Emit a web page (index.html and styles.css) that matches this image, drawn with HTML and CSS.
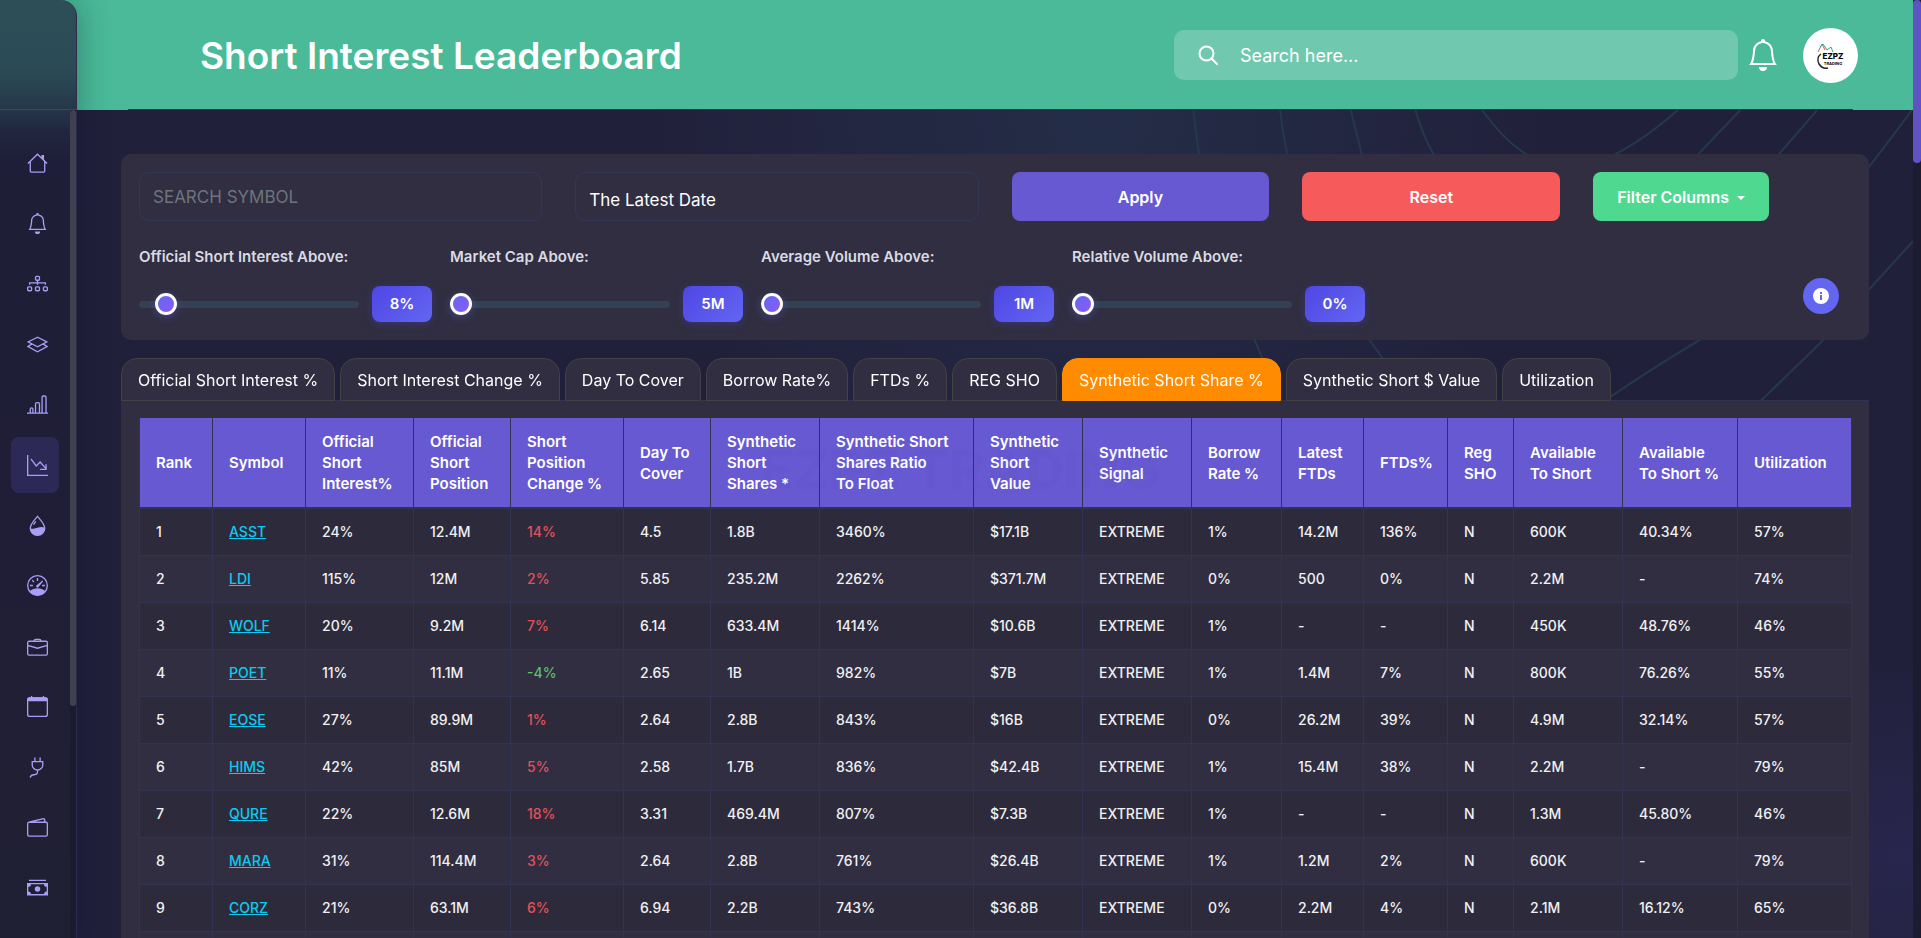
FILE: index.html
```
<!DOCTYPE html>
<html lang="en">
<head>
  <meta charset="UTF-8">
  <meta name="viewport" content="width=device-width, initial-scale=1.0">
  <title>Short Interest Leaderboard</title>
  <link rel="stylesheet" href="styles.css">
</head>
<body>

  <!-- Sidebar -->
  <aside class="sidebar">
    <div class="sidebar-logo"></div>
    <div class="sidebar-body">
      <nav class="sidebar-nav">
        <a href="#" aria-label="Home"><svg viewBox="0 0 16 16"><path class="line" d="M.7 8 8 .9 15.300 8M2.500 6.700v7.100a.7.7 0 0 0 .7.7h9.600a.7.7 0 0 0 .7-.7V6.700"/><path d="M11 1.500h2v4.300l-2-2z"/></svg></a>
        <a href="#" aria-label="Alerts"><svg viewBox="0 0 16 16"><path d="M8 16a2 2 0 0 0 2-2H6a2 2 0 0 0 2 2M8 1.918l-.797.161A4 4 0 0 0 4 6c0 .628-.134 2.197-.459 3.742-.16.767-.376 1.566-.663 2.258h10.244c-.287-.692-.502-1.490-.663-2.258C12.134 8.197 12 6.628 12 6a4 4 0 0 0-3.203-3.920zM14.220 12c.223.447.481.801.78 1H1c.299-.199.557-.553.78-1C2.680 10.200 3 6.880 3 6c0-2.420 1.720-4.440 4.005-4.901a1 1 0 1 1 1.990 0A5 5 0 0 1 13 6c0 .88.32 4.200 1.220 6"/></svg></a>
        <a href="#" aria-label="Structure"><svg viewBox="0 0 16 16"><g class="line"><rect x="6.500" y="2.500" width="3" height="3" rx=".8"/><rect x=".5" y="10.500" width="3" height="3" rx=".8"/><rect x="6.500" y="10.500" width="3" height="3" rx=".8"/><rect x="12.500" y="10.500" width="3" height="3" rx=".8"/><path d="M8 5.500V9M2 9V7.500h12V9"/></g></svg></a>
        <a href="#" aria-label="Layers"><svg viewBox="0 0 16 16"><path class="line" d="M8 2.500.8 6 8 9.700 15.200 6zM3.600 7.700.8 9.500 8 13.500l7.200-4-2.800-1.800"/></svg></a>
        <a href="#" aria-label="Charts"><svg viewBox="0 0 16 16"><path class="line" d="M0 14.500h16M2.500 14v-2.500a1 1 0 0 1 1-1h0a1 1 0 0 1 1 1V14M6.500 14V7.500a1 1 0 0 1 1-1h1a1 1 0 0 1 1 1V14M11.500 14V2.500a1 1 0 0 1 1-1h1a1 1 0 0 1 1 1V14"/></svg></a>
        <a href="#" class="active" aria-label="Short Interest"><svg viewBox="0 0 16 16"><path class="line" d="M.5 0v15.500H16M3 3l4 5.300 3-3 4.300 4.900M10 11h4.500V7"/></svg></a>
        <a href="#" aria-label="Liquidity"><svg viewBox="0 0 16 16"><path class="line" d="M8 1C6 3.500 2.500 7 2.500 10a5.500 5.500 0 0 0 11 0C13.500 7 10 3.500 8 1zM5 7.300l1.700-2.500"/><path d="M2.500 10c2 .9 4 .3 5.500-.2s3.500-1 5.500-.1c0 3.300-2.500 5.800-5.500 5.800S2.500 13.200 2.500 10"/></svg></a>
        <a href="#" aria-label="Speed"><svg viewBox="0 0 16 16"><circle class="line" cx="8" cy="8" r="7.500"/><path class="line" d="M8 2.300v2.200M2.300 8h2.200M11.500 8h2.200M4 4l1.300 1.300"/><path d="m11.800 4.200.5.500L8.800 9.200a1 1 0 1 1-1.500-1.300zM2 12.400C4 10.500 6 10 8 10s4 .5 6 2.400c-1.300 2-3.500 3.200-6 3.200s-4.700-1.200-6-3.200"/></svg></a>
        <a href="#" aria-label="Portfolio"><svg viewBox="0 0 16 16"><path class="line" d="M1.500 4h13a1 1 0 0 1 1 1v8.500a1 1 0 0 1-1 1h-13a1 1 0 0 1-1-1V5a1 1 0 0 1 1-1zM.5 7.200 8 9.300l7.500-2.100M5.500 4v-.5a1 1 0 0 1 1-1h3a1 1 0 0 1 1 1V4"/></svg></a>
        <a href="#" aria-label="Calendar"><svg viewBox="0 0 16 16"><rect class="line" x=".5" y="1.500" width="15" height="14" rx="1.500"/><path d="M3 0h1v1h8V0h1v1h1a2 2 0 0 1 2 2v1H0V3a2 2 0 0 1 2-2h1z"/></svg></a>
        <a href="#" aria-label="Connections"><svg viewBox="0 0 16 16"><path class="line" d="M6 .3v3.200M10 .3v3.200M4 3.500h8v2.800a4 3.600 0 0 1-8 0zM8 9.900v1.400c0 2-1 2.200-2.600 2.200s-2.600.3-3 2.200"/></svg></a>
        <a href="#" aria-label="Wallet"><svg viewBox="0 0 16 16"><path class="line" d="M1.500 4h13a1 1 0 0 1 1 1v8.500a1 1 0 0 1-1 1h-13a1 1 0 0 1-1-1V5a1 1 0 0 1 1-1zM1.500 4l11-2.700a.9.9 0 0 1 1 .8V4"/></svg></a>
        <a href="#" aria-label="Cash"><svg viewBox="0 0 16 16"><path d="M1.500 2h13v1h-13zM0 4.500h16v9.500H0zm3 1a2 2 0 0 1-2 2V11a2 2 0 0 1 2 2h10a2 2 0 0 1 2-2V7.500a2 2 0 0 1-2-2z" fill-rule="evenodd"/><circle cx="8" cy="9.200" r="2.100"/></svg></a>
      </nav>
      <div class="sidebar-scroll"><div class="sidebar-thumb"></div></div>
    </div>
  </aside>

  <div class="page">
    <!-- Header -->
    <header class="header">
      <h1>Short Interest Leaderboard</h1>
      <div class="header-right">
        <label class="search">
          <svg viewBox="0 0 20 20"><circle cx="8.500" cy="8.500" r="7"/><path d="m13.500 13.500 5.500 5.500"/></svg>
          <input type="text" placeholder="Search here..." aria-label="Search">
        </label>
        <button class="bell" aria-label="Notifications">
          <svg viewBox="0 0 16 16"><path d="M8 16a2 2 0 0 0 2-2H6a2 2 0 0 0 2 2M8 1.918l-.797.161A4 4 0 0 0 4 6c0 .628-.134 2.197-.459 3.742-.16.767-.376 1.566-.663 2.258h10.244c-.287-.692-.502-1.490-.663-2.258C12.134 8.197 12 6.628 12 6a4 4 0 0 0-3.203-3.920zM14.220 12c.223.447.481.801.78 1H1c.299-.199.557-.553.78-1C2.680 10.200 3 6.880 3 6c0-2.420 1.720-4.440 4.005-4.901a1 1 0 1 1 1.990 0A5 5 0 0 1 13 6c0 .88.32 4.200 1.220 6"/></svg>
        </button>
        <a href="#" class="avatar" aria-label="Profile">
          <svg viewBox="0 0 55 55">
            <path d="M18 26c-3 2-4 6-2 10 2 3 5 5 9 4" fill="none" stroke="#222" stroke-width="1.500"/>
            <path d="m15 24 4-8 3 6" fill="none" stroke="#e0525f"/>
            <path d="m17 19 3-3 4 6 4-3 2 5" fill="none" stroke="#35a28a"/>
            <text x="30" y="31" text-anchor="middle" font-size="8" font-weight="800">EZPZ</text>
            <text x="30" y="37" text-anchor="middle" font-size="4" font-weight="700">TRADING</text>
          </svg>
        </a>
      </div>
    </header>

    <main class="main">
      <!-- Contour lines behind the panels -->
      <svg class="contours" viewBox="77 110 1836 828" preserveAspectRatio="xMaxYMin slice" aria-hidden="true">
        <path d="M1200 110Q1212 240 1284 390M1286 110Q1300 240 1389 358T1480 430M1356 110Q1362 135 1367 154M1420 110Q1427 135 1438 154"/>
        <path d="M1486 110C1540 185 1595 185 1680 110M1742 110 1700 154M1818 110 1780 154M1912 110Q1780 290 1698 340T1600 405M1913 240 1822 340 1750 410"/>
      </svg>

      <!-- Filters -->
      <form class="filters">
        <div class="filter-row">
          <input class="field" type="text" placeholder="SEARCH SYMBOL" aria-label="Search symbol">
          <select class="field" aria-label="Date"><option>The Latest Date</option></select>
          <button type="button" class="btn btn-apply">Apply</button>
          <button type="button" class="btn btn-reset">Reset</button>
          <button type="button" class="btn btn-columns">Filter Columns</button>
        </div>
        <div class="slider-row">
          <div class="slider">
            <label for="shortInterest">Official Short Interest Above:</label>
            <div class="slider-line"><input type="range" id="shortInterest" value="8"><output for="shortInterest">8%</output></div>
          </div>
          <div class="slider">
            <label for="marketCap">Market Cap Above:</label>
            <div class="slider-line"><input type="range" id="marketCap" value="0"><output for="marketCap">5M</output></div>
          </div>
          <div class="slider">
            <label for="avgVolume">Average Volume Above:</label>
            <div class="slider-line"><input type="range" id="avgVolume" value="0"><output for="avgVolume">1M</output></div>
          </div>
          <div class="slider">
            <label for="relVolume">Relative Volume Above:</label>
            <div class="slider-line"><input type="range" id="relVolume" value="0"><output for="relVolume">0%</output></div>
          </div>
          <button type="button" class="info" aria-label="Info"><svg viewBox="0 0 16 16"><circle cx="8" cy="8" r="8"/><path d="M7 7h2v5H7zM7 4h2v2H7z"/></svg></button>
        </div>
      </form>

      <!-- Tabs -->
      <div class="tabs" role="tablist">
        <button role="tab">Official Short Interest %</button>
        <button role="tab">Short Interest Change %</button>
        <button role="tab">Day To Cover</button>
        <button role="tab">Borrow Rate%</button>
        <button role="tab">FTDs %</button>
        <button role="tab">REG SHO</button>
        <button role="tab" class="active" aria-selected="true">Synthetic Short Share %</button>
        <button role="tab">Synthetic Short $ Value</button>
        <button role="tab">Utilization</button>
      </div>

      <div class="table-wrap">
        <table>
          <colgroup>
            <col class="w-rank"><col class="w-symbol"><col class="w-interest"><col class="w-position"><col class="w-change"><col class="w-cover"><col class="w-shares"><col class="w-ratio"><col class="w-value"><col class="w-signal"><col class="w-borrow"><col class="w-ftds"><col class="w-ftdp"><col class="w-reg"><col class="w-avail"><col class="w-availp"><col class="w-util">
          </colgroup>
          <thead>
            <tr>
              <th>Rank</th><th>Symbol</th><th>Official<br>Short<br>Interest%</th><th>Official<br>Short<br>Position</th><th>Short<br>Position<br>Change %</th><th>Day To<br>Cover</th><th>Synthetic<br>Short<br>Shares *</th><th>Synthetic Short<br>Shares Ratio<br>To Float</th><th>Synthetic<br>Short<br>Value</th><th>Synthetic<br>Signal</th><th>Borrow<br>Rate %</th><th>Latest<br>FTDs</th><th>FTDs%</th><th>Reg<br>SHO</th><th>Available<br>To Short</th><th>Available<br>To Short %</th><th>Utilization</th>
            </tr>
          </thead>
          <tbody>
            <tr><td>1</td><td><a href="#">ASST</a></td><td>24%</td><td>12.4M</td><td class="up">14%</td><td>4.5</td><td>1.8B</td><td>3460%</td><td>$17.1B</td><td>EXTREME</td><td>1%</td><td>14.2M</td><td>136%</td><td>N</td><td>600K</td><td>40.34%</td><td>57%</td></tr>
            <tr><td>2</td><td><a href="#">LDI</a></td><td>115%</td><td>12M</td><td class="up">2%</td><td>5.85</td><td>235.2M</td><td>2262%</td><td>$371.7M</td><td>EXTREME</td><td>0%</td><td>500</td><td>0%</td><td>N</td><td>2.2M</td><td>-</td><td>74%</td></tr>
            <tr><td>3</td><td><a href="#">WOLF</a></td><td>20%</td><td>9.2M</td><td class="up">7%</td><td>6.14</td><td>633.4M</td><td>1414%</td><td>$10.6B</td><td>EXTREME</td><td>1%</td><td>-</td><td>-</td><td>N</td><td>450K</td><td>48.76%</td><td>46%</td></tr>
            <tr><td>4</td><td><a href="#">POET</a></td><td>11%</td><td>11.1M</td><td class="down">-4%</td><td>2.65</td><td>1B</td><td>982%</td><td>$7B</td><td>EXTREME</td><td>1%</td><td>1.4M</td><td>7%</td><td>N</td><td>800K</td><td>76.26%</td><td>55%</td></tr>
            <tr><td>5</td><td><a href="#">EOSE</a></td><td>27%</td><td>89.9M</td><td class="up">1%</td><td>2.64</td><td>2.8B</td><td>843%</td><td>$16B</td><td>EXTREME</td><td>0%</td><td>26.2M</td><td>39%</td><td>N</td><td>4.9M</td><td>32.14%</td><td>57%</td></tr>
            <tr><td>6</td><td><a href="#">HIMS</a></td><td>42%</td><td>85M</td><td class="up">5%</td><td>2.58</td><td>1.7B</td><td>836%</td><td>$42.4B</td><td>EXTREME</td><td>1%</td><td>15.4M</td><td>38%</td><td>N</td><td>2.2M</td><td>-</td><td>79%</td></tr>
            <tr><td>7</td><td><a href="#">QURE</a></td><td>22%</td><td>12.6M</td><td class="up">18%</td><td>3.31</td><td>469.4M</td><td>807%</td><td>$7.3B</td><td>EXTREME</td><td>1%</td><td>-</td><td>-</td><td>N</td><td>1.3M</td><td>45.80%</td><td>46%</td></tr>
            <tr><td>8</td><td><a href="#">MARA</a></td><td>31%</td><td>114.4M</td><td class="up">3%</td><td>2.64</td><td>2.8B</td><td>761%</td><td>$26.4B</td><td>EXTREME</td><td>1%</td><td>1.2M</td><td>2%</td><td>N</td><td>600K</td><td>-</td><td>79%</td></tr>
            <tr><td>9</td><td><a href="#">CORZ</a></td><td>21%</td><td>63.1M</td><td class="up">6%</td><td>6.94</td><td>2.2B</td><td>743%</td><td>$36.8B</td><td>EXTREME</td><td>0%</td><td>2.2M</td><td>4%</td><td>N</td><td>2.1M</td><td>16.12%</td><td>65%</td></tr>
            <tr><td></td><td></td><td></td><td></td><td></td><td></td><td></td><td></td><td></td><td></td><td></td><td></td><td></td><td></td><td></td><td></td><td></td></tr>
          </tbody>
        </table>
      </div>
    </main>
  </div>

  <div class="page-scroll"><div class="page-thumb"></div></div>
  <div class="watermark" aria-hidden="true">EZPZ TRADING</div>

</body>
</html>
```
FILE: styles.css
```
* {
  box-sizing: border-box;
}
body {
  margin: 0;
  height: 100vh;
  display: flex;
  overflow: hidden;
  background: #21203b;
  color: #fff;
  font-family: Inter, "Open Sans", sans-serif;
  font-size: 14px;
}
button, input, select {
  font-family: inherit;
  color: inherit;
  margin: 0;
}
button {
  border: none;
  cursor: pointer;
}

/* Sidebar */
.sidebar {
  position: relative;
  z-index: 2;
  flex: 0 0 77px;
  display: flex;
  flex-direction: column;
  border-right: 1px solid #2c2c4e;
  border-top-right-radius: 16px;
  background: linear-gradient(#2d4e57 0, #2b4a55 70px, #263a4c 104px, #212740 130px, #1f1e38 160px, #1f1e36 600px, #211f35 750px, #1f1f33 100%);
  box-shadow: 0 0 32px rgba(15, 15, 35, 0.35);
}
.sidebar-logo {
  flex: 0 0 110px;
  border-bottom: 1px solid #39495c;
}
.sidebar-body {
  flex: 1;
  display: flex;
  justify-content: space-between;
}
.sidebar-nav {
  display: flex;
  flex-direction: column;
  justify-content: space-between;
  padding: 25px 0 22px 11px;
}
.sidebar-nav a {
  display: flex;
  align-items: center;
  width: 48px;
  height: 56px;
  padding-left: 16px;
  border-radius: 8px;
}
.sidebar-nav a.active {
  background: #2d2957;
}
.sidebar-nav svg {
  width: 21px;
  height: 21px;
  fill: #a99df5;
}
.sidebar-nav .line {
  fill: none;
  stroke: #a99df5;
}
.sidebar-scroll {
  width: 6px;
  background: #1b1a2e;
}
.sidebar-thumb {
  height: 72%;
  border-radius: 3px;
  background: #41404f;
}

/* Header */
.page {
  flex: 1;
  min-width: 0;
  display: flex;
  flex-direction: column;
  margin-left: -17px;
}
.header {
  flex: 0 0 110px;
  display: flex;
  align-items: center;
  justify-content: space-between;
  padding: 0 55px 0 140px;
  background: linear-gradient(#2c3850, #2c3850) no-repeat 68px 100% / calc(100% - 128px) 1px, #4aba98;
}
.header h1 {
  margin: 0;
  font-size: 37px;
  font-weight: 600;
}
.header-right {
  display: flex;
  align-items: center;
}
.search {
  display: flex;
  align-items: center;
  gap: 22px;
  width: 564px;
  height: 50px;
  padding: 0 24px;
  border-radius: 10px;
  background: #70c9ae;
}
.search svg {
  width: 20px;
  height: 20px;
  fill: none;
  stroke: #fff;
  stroke-width: 2;
  stroke-linecap: round;
}
.search input {
  flex: 1;
  padding: 0;
  border: none;
  outline: none;
  background: none;
  font-size: 18px;
}
.search input::placeholder {
  color: #fff;
}
.bell {
  padding: 0;
  margin: 0 24px 0 9px;
  background: none;
}
.bell svg {
  display: block;
  width: 32px;
  height: 32px;
  fill: #fff;
}
.avatar {
  width: 55px;
  height: 55px;
  border-radius: 50%;
  background: #fff;
}
.avatar svg {
  display: block;
}

/* Main area */
.main {
  position: relative;
  flex: 1;
  min-height: 0;
  padding: 44px 44px 0 61px;
  overflow: hidden;
  background:
    radial-gradient(circle at 56% 0, #242d47 0, rgba(36, 45, 71, 0) 460px),
    radial-gradient(ellipse at 100% 90%, #28264d 0, rgba(40, 38, 77, 0) 500px),
    #21203b;
}
.contours {
  position: absolute;
  inset: 0;
  width: 100%;
  height: 100%;
  fill: none;
  stroke: #25394b;
  stroke-width: 2;
}

/* Filters */
.filters {
  position: relative;
  padding: 18px;
  margin-bottom: 18px;
  border-radius: 10px;
  background: #302e40;
}
.filter-row {
  display: grid;
  grid-template-columns: repeat(12, 1fr);
  gap: 33px;
  margin-bottom: 27px;
}
.field {
  grid-column: span 3;
  height: 49px;
  padding: 0 13px;
  border: 1px solid #333658;
  border-radius: 10px;
  background: none;
  font-size: 17px;
  outline: none;
  appearance: none;
}
.field::placeholder {
  color: #6c757d;
}
select.field {
  padding-top: 6px;
}
.btn {
  grid-column: span 2;
  border-radius: 8px;
  font-size: 16px;
  font-weight: 600;
}
.btn-apply {
  background: #6759d1;
}
.btn-reset {
  background: #f75a5b;
}
.btn-columns {
  justify-self: start;
  padding: 0 24px;
  background: #4fd88f;
}
.btn-columns::after {
  content: "";
  display: inline-block;
  margin-left: 8px;
  vertical-align: 3px;
  border: 4px solid transparent;
  border-top-color: #fff;
  border-bottom: 0;
}
.slider-row {
  display: flex;
  gap: 18px;
}
.slider {
  width: 293px;
}
.slider label {
  display: block;
  margin-bottom: 20px;
  line-height: 18px;
  color: #d9dbe3;
  font-size: 15px;
  font-weight: 600;
}
.slider-line {
  display: flex;
  align-items: center;
  gap: 13px;
}
.slider input {
  flex: 1;
  min-width: 0;
  height: 7px;
  border-radius: 4px;
  background: #334155;
  appearance: none;
  outline: none;
}
.slider input::-webkit-slider-thumb {
  appearance: none;
  width: 22px;
  height: 22px;
  border: 3px solid #fff;
  border-radius: 50%;
  background: linear-gradient(135deg, #6366f1, #8b5cf6);
  box-shadow: 0 2px 8px rgba(99, 102, 241, 0.4);
}
.slider output {
  width: 60px;
  line-height: 36px;
  border-radius: 8px;
  text-align: center;
  font-size: 15px;
  font-weight: 600;
  background: linear-gradient(135deg, #4f46e5, #6366f1);
  box-shadow: 0 2px 8px rgba(79, 70, 229, 0.3);
}
.info {
  align-self: flex-end;
  display: flex;
  align-items: center;
  justify-content: center;
  width: 36px;
  height: 36px;
  margin: 0 12px 8px auto;
  padding: 0;
  border-radius: 50%;
  background: #6366f1;
}
.info svg {
  width: 16px;
  height: 16px;
  fill: #fff;
}
.info path {
  fill: #6366f1;
}

/* Tabs */
.tabs {
  position: relative;
  z-index: 1;
  display: flex;
  gap: 5px;
}
.tabs button {
  height: 43px;
  margin-bottom: -1px;
  padding: 0 16px;
  border: 1px solid #424143;
  border-radius: 16px 16px 0 0;
  background: #302e40;
  font-size: 16px;
}
.tabs button.active {
  border-color: #ff8c00;
  background: #ff8c00;
}

/* Table */
.table-wrap {
  position: relative;
  padding: 17px 18px 0;
  border-top: 1px solid #313353;
  background: #302e40;
}
table {
  width: 100%;
  table-layout: fixed;
  border-collapse: collapse;
}
th, td {
  padding: 0 0 0 16px;
  border: 1px solid #313353;
  text-align: left;
  white-space: nowrap;
}
th {
  height: 90px;
  border-top: none;
  border-bottom: 2px solid #313353;
  background: #6759d1;
  font-size: 15px;
  line-height: 21px;
  font-weight: 600;
}
td {
  height: 47px;
  font-weight: 500;
  color: #f1f1f3;
}
tbody tr:nth-child(odd) {
  background: #2d2b3b;
}
td a {
  color: #0dcaf0;
}
td.up {
  color: #e2515a;
}
td.down {
  color: #5bc06a;
}
.w-rank { width: 73px; }
.w-symbol { width: 93px; }
.w-interest { width: 108px; }
.w-position { width: 97px; }
.w-change { width: 113px; }
.w-cover { width: 87px; }
.w-shares { width: 109px; }
.w-ratio { width: 154px; }
.w-value { width: 109px; }
.w-signal { width: 109px; }
.w-borrow { width: 90px; }
.w-ftds { width: 82px; }
.w-ftdp { width: 84px; }
.w-reg { width: 66px; }
.w-avail { width: 109px; }
.w-availp { width: 115px; }
.w-util { width: 114px; }

/* Page scrollbar */
.page-scroll {
  flex: 0 0 8px;
  background: #1c1b30;
}
.page-thumb {
  height: 163px;
  border-radius: 4px;
  background: #6152c4;
}

.watermark {
  position: fixed;
  inset: 0;
  display: flex;
  align-items: center;
  justify-content: center;
  font-size: 54px;
  font-weight: 700;
  color: rgba(80, 70, 170, 0.06);
  pointer-events: none;
}
```
